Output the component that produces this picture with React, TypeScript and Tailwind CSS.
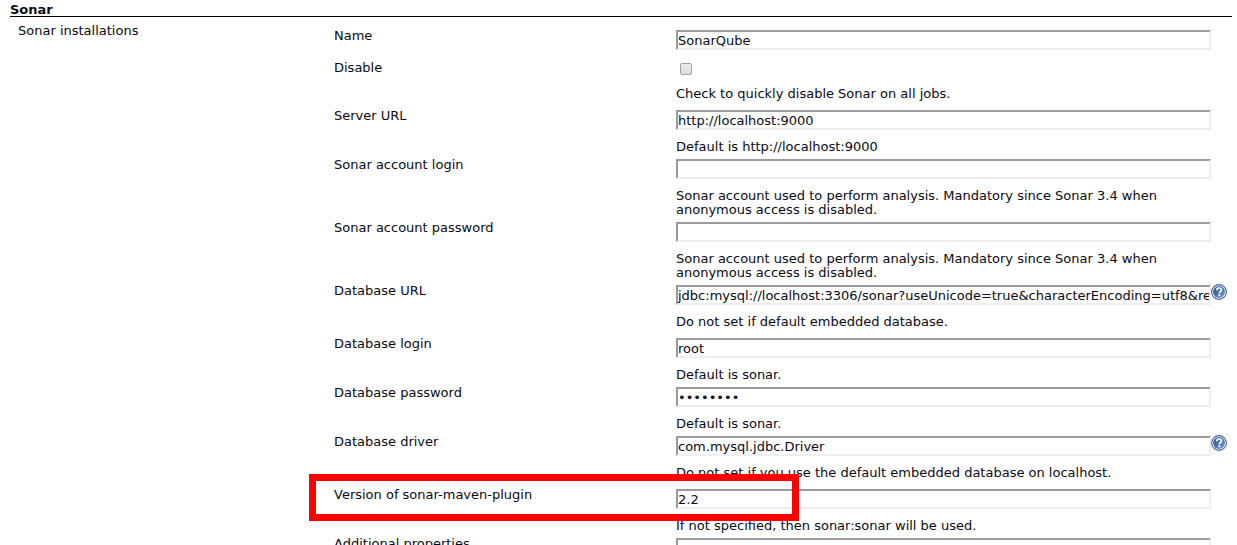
import React, { useId } from "react";

type Field = {
  label: string;
  value?: string;
  type?: "text" | "password" | "checkbox";
  hint?: string;
  help?: boolean;
  highlighted?: boolean;
};

const fields: Field[] = [
  { label: "Name", value: "SonarQube" },
  { label: "Disable", type: "checkbox", hint: "Check to quickly disable Sonar on all jobs." },
  { label: "Server URL", value: "http://localhost:9000", hint: "Default is http://localhost:9000" },
  {
    label: "Sonar account login",
    value: "",
    hint: "Sonar account used to perform analysis. Mandatory since Sonar 3.4 when anonymous access is disabled.",
  },
  {
    label: "Sonar account password",
    value: "",
    type: "password",
    hint: "Sonar account used to perform analysis. Mandatory since Sonar 3.4 when anonymous access is disabled.",
  },
  {
    label: "Database URL",
    value: "jdbc:mysql://localhost:3306/sonar?useUnicode=true&characterEncoding=utf8&rewriteBatchedStatements=true",
    hint: "Do not set if default embedded database.",
    help: true,
  },
  { label: "Database login", value: "root", hint: "Default is sonar." },
  { label: "Database password", value: "password", type: "password", hint: "Default is sonar." },
  {
    label: "Database driver",
    value: "com.mysql.jdbc.Driver",
    hint: "Do not set if you use the default embedded database on localhost.",
    help: true,
  },
  {
    label: "Version of sonar-maven-plugin",
    value: "2.2",
    hint: "If not specified, then sonar:sonar will be used.",
    highlighted: true,
  },
  { label: "Additional properties", value: "" },
];

function HelpIcon() {
  return (
    <svg viewBox="0 0 16 16" className="block size-4" aria-hidden="true">
      <defs>
        <linearGradient id="help-fill" x1="0" y1="0" x2="1" y2="1">
          <stop offset="0" stopColor="#2f5896" />
          <stop offset="0.5" stopColor="#4a73ad" />
          <stop offset="1" stopColor="#7fa3d0" />
        </linearGradient>
      </defs>
      <circle cx="8" cy="8" r="7.4" fill="#fff" stroke="#3f649d" strokeWidth="1.1" />
      <circle cx="8" cy="8" r="6" fill="url(#help-fill)" />
      <path
        d="M5.8 6.2C5.8 4.7 6.8 4 8.1 4c1.4 0 2.3.8 2.3 1.9 0 1.5-2 1.7-2 3.3"
        fill="none"
        stroke="#fff"
        strokeWidth="1.7"
      />
      <rect x="7.4" y="10.3" width="1.9" height="1.9" fill="#fff" />
    </svg>
  );
}

function FieldRow({ field }: { field: Field }) {
  const id = useId();
  const { label, value, type = "text", hint, help, highlighted } = field;
  const spacing = help || type === "checkbox" ? "pb-[9px]" : hint ? "pb-[5px]" : "pb-3";
  return (
    <div className={`relative grid grid-cols-[342fr_535fr_21px] items-start ${spacing}`}>
      <label htmlFor={id} className="-mt-px">
        {label}
      </label>
      <div className="min-w-0">
        {type === "checkbox" ? (
          <input
            id={id}
            type="checkbox"
            className="mt-px mb-3 ml-1 block size-3 appearance-none rounded-[2px] border border-[#a2a2a2] bg-linear-to-b from-[#ededed] to-[#dcdcdc] checked:bg-[#5b7fb8]"
          />
        ) : (
          <input
            id={id}
            type={type}
            defaultValue={value}
            className="block h-5 w-full border-2 border-t-[#9a9a9a] border-r-[#eeeeee] border-b-[#eeeeee] border-l-[#9a9a9a] bg-white outline-none"
          />
        )}
        {hint && <p className={type === "checkbox" ? "" : "mt-[10px]"}>{hint}</p>}
      </div>
      {help && (
        <button type="button" aria-label={`Help for ${label}`} className="-mt-px size-4 cursor-pointer">
          <HelpIcon />
        </button>
      )}
      {highlighted && (
        <div className="pointer-events-none absolute -top-[15px] -left-[25px] h-[47px] w-[490px] border-7 border-[#ff0000]" />
      )}
    </div>
  );
}

export default function App() {
  return (
    <main className="h-screen overflow-hidden bg-white pt-[3px] pr-[5px] pl-[10px] font-['DejaVu_Sans',sans-serif] text-[13px] leading-[14px] text-[#0a0a14]">
      <form>
        <h2 className="h-[14px] border-b border-black font-bold">
          Sonar
        </h2>
        <section className="grid grid-cols-[324fr_898fr]">
          <h3 className="pt-[7px] pl-2">Sonar installations</h3>
          <div className="min-w-0 pt-[13px]">
            {fields.map((field) => (
              <FieldRow key={field.label} field={field} />
            ))}
          </div>
        </section>
      </form>
    </main>
  );
}
